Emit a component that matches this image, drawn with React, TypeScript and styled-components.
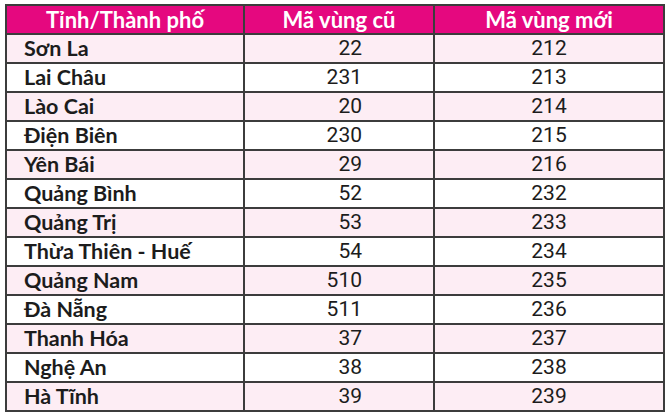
import React from 'react'
import styled, { createGlobalStyle } from 'styled-components'

const GlobalStyle = createGlobalStyle`
  body {
    margin: 0;
    background: #ffffff;
  }
`

const Page = styled.div`
  padding: 4px 8px 0 5px;
`

const Table = styled.table`
  border-collapse: collapse;
  width: 652px;
  table-layout: fixed;
  border: 2px solid #3c3c3c;
`

const HeadCell = styled.th<{ $width: number }>`
  width: ${p => p.$width}px;
  height: 27px;
  padding: 0;
  background: #e5087f;
  color: #ffffff;
  font-family: Lato, 'Liberation Sans', sans-serif;
  font-weight: 700;
  font-size: 22px;
  line-height: 1;
  text-align: center;
  border: 2px solid #3c3c3c;
  border-top: none;
`

const Row = styled.tr<{ $pink: boolean }>`
  background: ${p => (p.$pink ? '#fdedf4' : '#ffffff')};
`

const NameCell = styled.td`
  height: 27px;
  padding: 0 0 0 17px;
  font-family: Lato, 'Liberation Sans', sans-serif;
  font-weight: 700;
  font-size: 21.5px;
  line-height: 1;
  color: #1c1c1c;
  border: 2px solid #3c3c3c;
  white-space: nowrap;
`

const CodeCell = styled.td<{ $align: 'right' | 'center' }>`
  height: 27px;
  padding: ${p => (p.$align === 'right' ? '0 71px 0 0' : '0')};
  font-family: Roboto, 'Liberation Sans', sans-serif;
  font-weight: 400;
  font-size: 21px;
  line-height: 1;
  color: #1c1c1c;
  text-align: ${p => p.$align};
  border: 2px solid #3c3c3c;
`

const rows: [string, string, string][] = [
  ['Sơn La', '22', '212'],
  ['Lai Châu', '231', '213'],
  ['Lào Cai', '20', '214'],
  ['Điện Biên', '230', '215'],
  ['Yên Bái', '29', '216'],
  ['Quảng Bình', '52', '232'],
  ['Quảng Trị', '53', '233'],
  ['Thừa Thiên - Huế', '54', '234'],
  ['Quảng Nam', '510', '235'],
  ['Đà Nẵng', '511', '236'],
  ['Thanh Hóa', '37', '237'],
  ['Nghệ An', '38', '238'],
  ['Hà Tĩnh', '39', '239'],
]

const App: React.FC = () => {
  return (
    <Page>
      <GlobalStyle />
      <Table>
        <thead>
          <tr>
            <HeadCell $width={236}>Tỉnh/Thành phố</HeadCell>
            <HeadCell $width={188}>Mã vùng cũ</HeadCell>
            <HeadCell $width={228}>Mã vùng mới</HeadCell>
          </tr>
        </thead>
        <tbody>
          {rows.map(([name, oldCode, newCode], i) => (
            <Row key={name} $pink={i % 2 === 0}>
              <NameCell>{name}</NameCell>
              <CodeCell $align="right">{oldCode}</CodeCell>
              <CodeCell $align="center">{newCode}</CodeCell>
            </Row>
          ))}
        </tbody>
      </Table>
    </Page>
  )
}

export default App
